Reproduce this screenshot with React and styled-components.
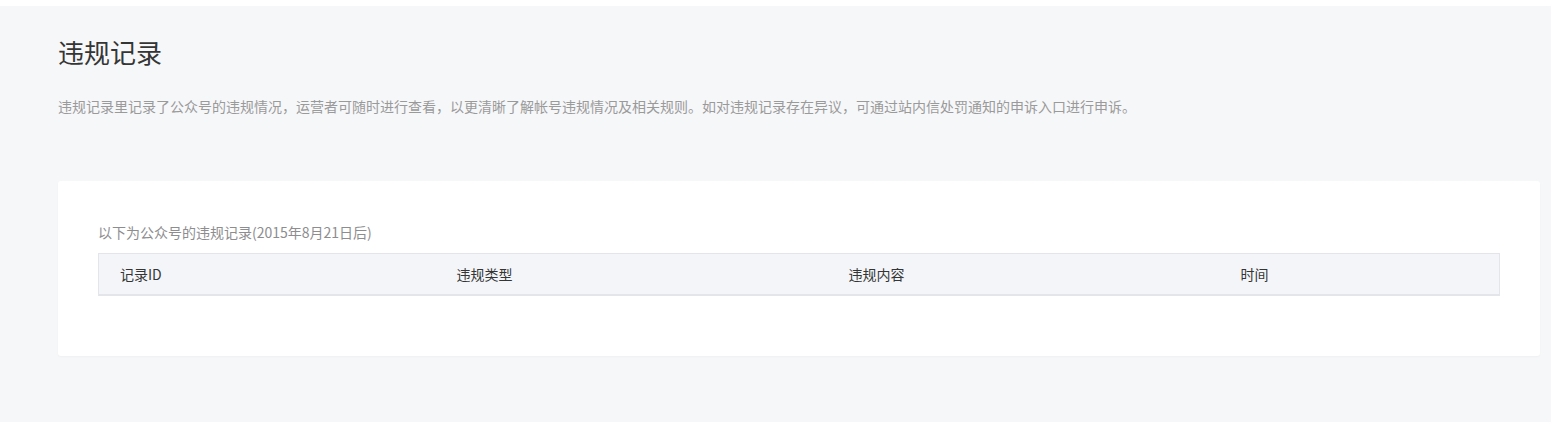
import React from "react";
import styled, { createGlobalStyle } from "styled-components";

const Global = createGlobalStyle`
  html, body { margin: 0; padding: 0; background: #ffffff; }
  body { font-family: "Noto Sans CJK SC", "Noto Sans", sans-serif; }
`;

const Page = styled.div`
  padding-top: 6px;
  background: #ffffff;
`;

const Main = styled.main`
  background: #f6f7f9;
  padding: 29px 11px 66px 58px;
  min-height: 321px;
`;

const Title = styled.h2`
  margin: 0;
  font-size: 26px;
  line-height: 34px;
  font-weight: 400;
  color: #353535;
`;

const Desc = styled.p`
  margin: 27px 0 0;
  font-size: 14px;
  line-height: 20px;
  color: #9a9a9a;
`;

const Card = styled.section`
  margin-top: 65px;
  background: #ffffff;
  border-radius: 3px;
  padding: 41px 40px 60px;
  box-shadow: 0 1px 2px rgba(0, 0, 0, 0.03);
`;

const Caption = styled.div`
  font-size: 14px;
  line-height: 20px;
  color: #8d8d8f;
  margin-bottom: 11px;
`;

const Table = styled.table`
  width: 100%;
  border-collapse: collapse;
  table-layout: fixed;
  background: #f4f5f9;
  border: 1px solid #e4e5ea;
  border-bottom-width: 2px;
`;

const Col = styled.col`
  width: ${(p) => p.$w};
`;

const Th = styled.th`
  text-align: left;
  font-weight: 400;
  font-size: 14px;
  line-height: 20px;
  color: #353535;
  padding: 10px 20px 10px 21px;
`;

const columns = [
  { label: "记录ID", w: "337px" },
  { label: "违规类型", w: "392px" },
  { label: "违规内容", w: "392px" },
  { label: "时间", w: "auto" },
];

export default function App() {
  return (
    <>
      <Global />
      <Page>
        <Main>
          <Title>违规记录</Title>
          <Desc>
            违规记录里记录了公众号的违规情况，运营者可随时进行查看，以更清晰了解帐号违规情况及相关规则。如对违规记录存在异议，可通过站内信处罚通知的申诉入口进行申诉。
          </Desc>
          <Card>
            <Caption>以下为公众号的违规记录(2015年8月21日后)</Caption>
            <Table>
              <colgroup>
                {columns.map((c) => (
                  <Col key={c.label} $w={c.w} />
                ))}
              </colgroup>
              <thead>
                <tr>
                  {columns.map((c) => (
                    <Th key={c.label}>{c.label}</Th>
                  ))}
                </tr>
              </thead>
            </Table>
          </Card>
        </Main>
      </Page>
    </>
  );
}
